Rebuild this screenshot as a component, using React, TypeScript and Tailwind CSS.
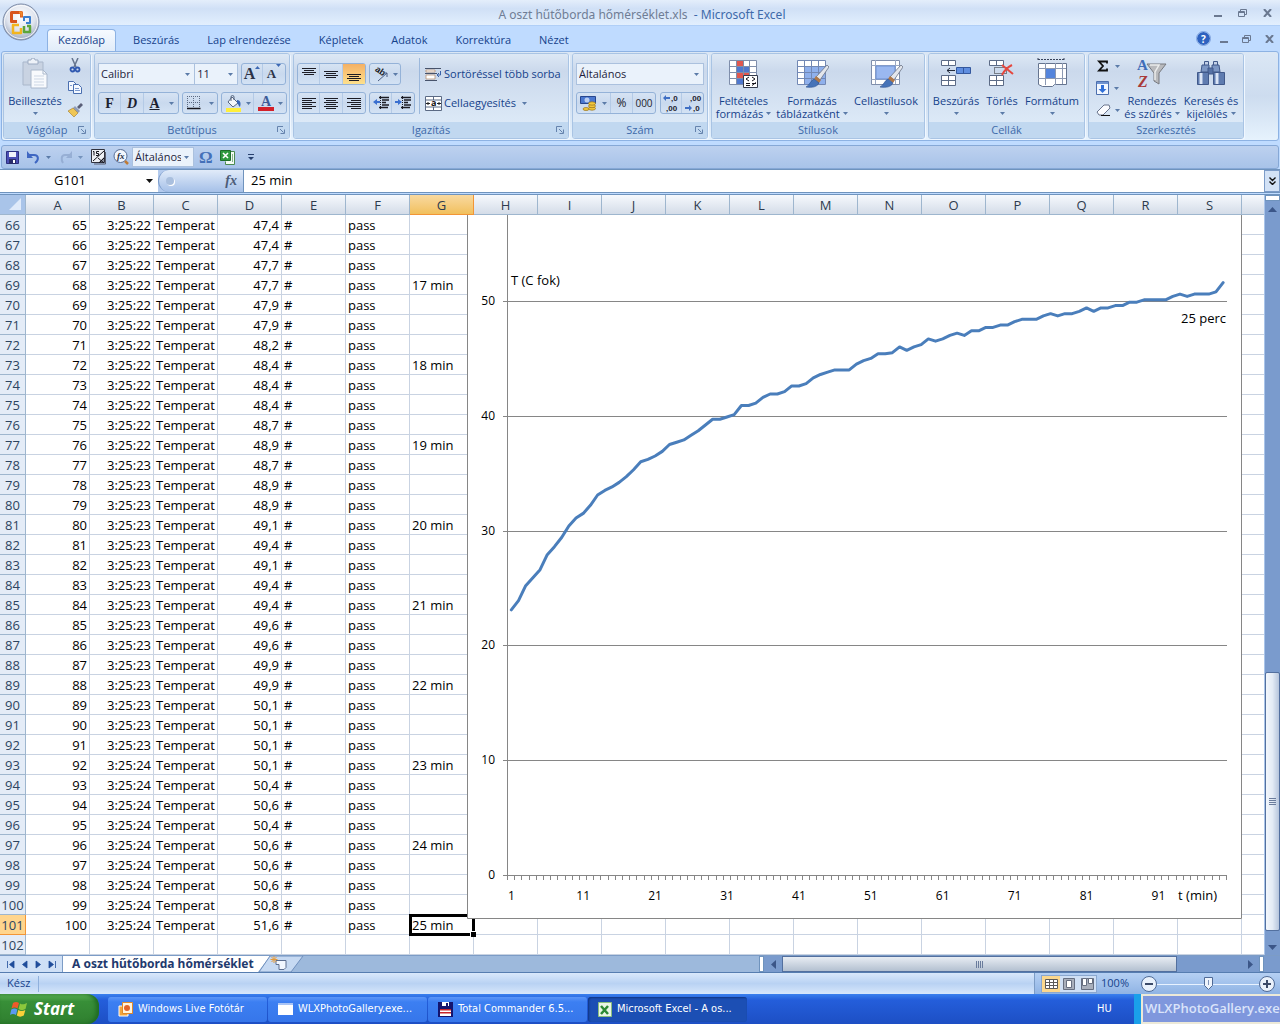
import { useState } from 'react';
import type { ReactNode } from 'react';
import clsx from 'clsx';

const COLUMNS = ['A', 'B', 'C', 'D', 'E', 'F', 'G', 'H', 'I', 'J', 'K', 'L', 'M', 'N', 'O', 'P', 'Q', 'R', 'S', ''];
const TABS = ['Kezdőlap', 'Beszúrás', 'Lap elrendezése', 'Képletek', 'Adatok', 'Korrektúra', 'Nézet'];

const FIRST_ROW = 66;
const LAST_ROW = 102;

// all measurements, one per 15 s
const TEMPS = [
  23.1, 23.9, 25.2, 25.9, 26.6, 27.9, 28.6, 29.4, 30.4, 31.1,
  31.5, 32.2, 33.1, 33.5, 33.8, 34.2, 34.7, 35.3, 36.0, 36.2,
  36.5, 36.9, 37.5, 37.7, 37.9, 38.3, 38.7, 39.2, 39.7, 39.7,
  39.9, 40.1, 40.9, 40.9, 41.1, 41.6, 41.9, 41.9, 42.1, 42.6,
  42.6, 42.8, 43.3, 43.6, 43.8, 44.0, 44.0, 44.0, 44.5, 44.8,
  45.0, 45.4, 45.4, 45.5, 46.0, 45.7, 46.0, 46.2, 46.7, 46.5,
  46.7, 47.0, 47.2, 47.0, 47.4, 47.4, 47.7, 47.7, 47.9, 47.9,
  48.2, 48.4, 48.4, 48.4, 48.7, 48.9, 48.7, 48.9, 48.9, 49.1,
  49.4, 49.1, 49.4, 49.4, 49.6, 49.6, 49.9, 49.9, 50.1, 50.1,
  50.1, 50.1, 50.4, 50.6, 50.4, 50.6, 50.6, 50.6, 50.8, 51.6,
];

function rowCells(row: number): string[] {
  const n = row - 1;
  if (n > TEMPS.length) return [];
  const time = n <= 76 ? '3:25:22' : n <= 91 ? '3:25:23' : '3:25:24';
  const minute = n % 4 === 0 ? `${n / 4} min` : '';
  return [String(n), time, 'Temperat', TEMPS[n - 1].toFixed(1).replace('.', ','), '#', 'pass', minute];
}

/* ---------- small shared pieces ---------- */

function Arrow({ className }: { className?: string }) {
  return (
    <svg width="5" height="3" viewBox="0 0 5 3" className={clsx('shrink-0', className)}>
      <path d="M0 0h5L2.5 3z" fill="#5b7ba8" />
    </svg>
  );
}

function Combo({ label, value, className }: { label: string; value: string; className?: string }) {
  return (
    <div className={clsx('relative flex items-center border border-[#abc1de] bg-[#eaf2fb]', className)}>
      <select aria-label={label} className="w-full h-full appearance-none bg-transparent pl-[2px] pr-3 text-[11px] text-[#1e1e3c] outline-none">
        <option>{value}</option>
      </select>
      <Arrow className="absolute right-1 pointer-events-none" />
    </div>
  );
}

function ButtonGroup({ children }: { children: ReactNode }) {
  return (
    <div className="flex h-[22px] rounded-[3px] border border-[#94b2d8] bg-linear-to-b from-[#d6e3f3] via-[#c9d9ee] to-[#d3e2f4] divide-x divide-[#b4cae6]">
      {children}
    </div>
  );
}

function IconButton({ label, children, className }: { label: string; children: ReactNode; className?: string }) {
  return (
    <button aria-label={label} className={clsx('flex items-center justify-center gap-1 shrink-0', className)}>
      {children}
    </button>
  );
}

function Group({ title, launcher, className, children }: { title: string; launcher?: boolean; className?: string; children: ReactNode }) {
  return (
    <section className={clsx('flex flex-col shrink-0 rounded-[3px] border border-[#a9c4e4] shadow-[1px_1px_0_#f0f7ff] overflow-hidden', className)}>
      <div className="flex-1 bg-linear-to-b from-[#dde8f5] via-[#cbd9ec] via-25% to-[#dce9f7]">{children}</div>
      <div className="relative h-4 bg-[#c1d8f0] text-center text-[11px] leading-4 text-[#3e6aaa]">
        {title}
        {launcher && (
          <button aria-label={`${title} beállításai`} className="absolute right-1 top-1">
            <svg width="8" height="8" viewBox="0 0 8 8" fill="none" stroke="#6583ad">
              <path d="M.5 6V.5H6M3 3l3.500 3.500M7.500 3.500v4h-4" />
            </svg>
          </button>
        )}
      </div>
    </section>
  );
}

function BigButton({ icon, lines, className }: { icon: ReactNode; lines: string[]; className?: string }) {
  return (
    <button className={clsx('flex flex-col items-center shrink-0 pt-1 text-[11px] leading-[13px] text-[#15428b] whitespace-nowrap', className)}>
      <span className="flex h-9 items-start justify-center">{icon}</span>
      <span>{lines[0]}</span>
      <span className="flex h-[13px] items-center gap-[3px]">
        {lines[1]}
        <Arrow />
      </span>
    </button>
  );
}

/* ---------- icons ---------- */

function OfficeLogo() {
  return (
    <svg width="38" height="38" viewBox="0 0 38 38">
      <defs>
        <radialGradient id="orb" cx="50%" cy="35%" r="65%">
          <stop offset="0" stopColor="#ffffff" />
          <stop offset=".6" stopColor="#dfe4ee" />
          <stop offset="1" stopColor="#9aa6bd" />
        </radialGradient>
      </defs>
      <circle cx="19" cy="19" r="18" fill="url(#orb)" stroke="#7b8aa6" />
      <circle cx="19" cy="19" r="16.500" fill="none" stroke="#fff" strokeOpacity=".8" />
      <g fill="none" strokeLinejoin="round">
        <path d="M15 18.500H9.500V9.500h10v5" stroke="#d8541c" strokeWidth="3" />
        <path d="M17 9.500h2.500v4" stroke="#f08a2c" strokeWidth="2" />
        <path d="M22 18v-4h6v6h-4" stroke="#3a7fd0" strokeWidth="2" />
        <path d="M17 22h-6v8h8v-5" stroke="#f3b51e" strokeWidth="2.500" />
        <path d="M22 23v6h6v-6h-3" stroke="#5da63a" strokeWidth="2.500" />
      </g>
    </svg>
  );
}

function PasteIcon() {
  return (
    <svg width="28" height="32" viewBox="0 0 28 32">
      <path d="M2 4h20v23H2z" fill="#c9d3e2" stroke="#a9b7cb" />
      <path d="M7 2h3a2 2 0 0 1 4 0h3v4H7z" fill="#eef2f8" stroke="#9cabc2" />
      <path d="M10 12h12l4 4v14H10z" fill="#f8fafd" stroke="#aab8cc" />
      <path d="M22 12v4h4" fill="none" stroke="#aab8cc" />
      <path d="M13 18h10M13 21h10M13 24h10M13 27h10" stroke="#cdd7e5" />
    </svg>
  );
}

function CutIcon() {
  return (
    <svg width="12" height="15" viewBox="0 0 12 15" fill="none">
      <path d="M3 0l4 9M9 0L5 9" stroke="#66758f" strokeWidth="1.500" />
      <circle cx="3.500" cy="11.500" r="2" stroke="#2f58b0" strokeWidth="1.800" />
      <circle cx="8.500" cy="11.500" r="2" stroke="#2f58b0" strokeWidth="1.800" />
    </svg>
  );
}

function CopyIcon() {
  return (
    <svg width="16" height="14" viewBox="0 0 16 14" fill="#f4f8ff" stroke="#4a6fb0">
      <path d="M1.500.5h5l3 3v6h-8z" />
      <path d="M6.500 3.500h5l3 3v6h-8z" />
      <path d="M8 7.500h4M8 9.500h5M3 4.500h2" stroke="#7d9bd0" />
    </svg>
  );
}

function PainterIcon() {
  return (
    <svg width="15" height="14" viewBox="0 0 15 14">
      <path d="M9 4l4-4 2 2-4 4z" fill="#5a5f78" />
      <path d="M7 3l5 5-2 2-5-5z" fill="#8f9cb8" />
      <path d="M5 5l5 5-4 4-6-6z" fill="#efc655" stroke="#a07a28" strokeWidth=".6" />
    </svg>
  );
}

// rows of text; each number is a line's [inset, width]
function LinesIcon({ rows, top = 0 }: { rows: [number, number][]; top?: number }) {
  return (
    <svg width="14" height="13" viewBox="0 0 14 13" fill="#1c1c24">
      {rows.map(([x, w], i) => (
        <rect key={i} x={x} y={top + i * 2} width={w} height="1" />
      ))}
    </svg>
  );
}

function IndentIcon({ out }: { out?: boolean }) {
  return (
    <svg width="16" height="14" viewBox="0 0 16 14">
      <path d="M6 1.500h10M9 4h7M9 6.500h4M9 9h7M6 11.500h9" stroke="#1c1c24" strokeWidth="1.400" />
      <path d={out ? 'M0 6l4-3v2h3v2H4v2z' : 'M7 6L3 3v2H0v2h3v2z'} fill="#3a6fd0" />
      <path d="M7.500 0v14" stroke="#1c1c24" strokeDasharray="1 1" />
    </svg>
  );
}

function WrapIcon() {
  return (
    <svg width="17" height="15" viewBox="0 0 17 15">
      <path d="M0 1.500h16M0 6.500h12M0 13.500h12" stroke="#47536b" />
      <path d="M1 3h9v2H1zM1 8h9v4H1z" fill="#fff" stroke="#b99273" strokeWidth=".8" />
      <path d="M15.500 4v4h-3m1.500-2l-2 2 2 2" stroke="#3a62a8" fill="none" />
    </svg>
  );
}

function MergeIcon() {
  return (
    <svg width="17" height="15" viewBox="0 0 17 15">
      <path d="M.5.5h16v14H.5z" fill="#fff" stroke="#5b6a84" />
      <path d="M.5 4h16M.5 11h16M8.500 0v4M8.500 11v4" stroke="#5b6a84" />
      <path d="M1 7.500h4M12 7.500h4M3 6v3M14 6v3" stroke="#222" />
      <text x="6" y="10" fontSize="9" fontWeight="700" fill="#111">a</text>
    </svg>
  );
}

function BordersIcon() {
  return (
    <svg width="14" height="14" viewBox="0 0 14 14" fill="none" stroke="#5c6b84">
      <path d="M.5 0v12M6.500 0v12M12.500 0v12M0 .5h13M0 6.500h13" strokeDasharray="1 1" />
      <path d="M0 12.500h13.500" stroke="#16161e" strokeWidth="1.500" />
    </svg>
  );
}

function FillIcon() {
  return (
    <svg width="17" height="17" viewBox="0 0 17 17">
      <path d="M7 2l6 6-5 4-5-5z" fill="#f4f7fc" stroke="#56657f" />
      <path d="M6 6V2a1.500 1.500 0 0 1 3 0v3" fill="none" stroke="#56657f" />
      <path d="M12 5c4 0 4 4 3 7-2-1-1-3-3-4z" fill="#3765b5" />
      <path d="M1 13h15v4H1z" fill="#ffef3a" />
    </svg>
  );
}

function FontColorIcon() {
  return (
    <svg width="16" height="16" viewBox="0 0 16 16">
      <text x="3" y="11" fontSize="14" fontWeight="700" fill="#3d5b98" className="font-['Liberation_Serif',serif]">A</text>
      <path d="M0 12h16v4H0z" fill="#d3202a" />
    </svg>
  );
}

function MoneyIcon() {
  return (
    <svg width="17" height="16" viewBox="0 0 17 16">
      <path d="M.5 1.500h15v7H.5z" fill="#4b78cf" stroke="#27468e" />
      <circle cx="7" cy="5" r="2.500" fill="#b9cdf2" />
      <g fill="#f2c83c" stroke="#98711a" strokeWidth=".7">
        <ellipse cx="12" cy="13.500" rx="3.500" ry="1.700" />
        <ellipse cx="12" cy="11" rx="3.500" ry="1.700" />
        <ellipse cx="12" cy="8.500" rx="3.500" ry="1.700" />
        <ellipse cx="6" cy="14" rx="3" ry="1.500" />
      </g>
    </svg>
  );
}

function DecimalIcon({ more }: { more?: boolean }) {
  return (
    <svg width="18" height="20" viewBox="0 0 18 20" fontSize="8" fontWeight="700" fill="#23232f" className="font-['Liberation_Sans',sans-serif]">
      <path d={more ? 'M1 5l3-3v2h4v2H4v2z' : 'M8 15l-3-3v2H1v2h4v2z'} fill="#3f6fc4" />
      <text x={more ? 9 : 6} y="8">{more ? ',0' : ',00'}</text>
      <text x={more ? 4 : 9} y="18">{more ? ',00' : ',0'}</text>
    </svg>
  );
}

function Brush() {
  return (
    <g>
      <path d="M31 7l2 2-9 13-4-3z" fill="#e3e6ec" stroke="#6b7485" strokeWidth=".8" />
      <path d="M20 18l5 4-2 3-5-4z" fill="#b07848" />
      <path d="M18 21l5 4c-2 4-7 5-13 4 4-2 4-6 8-8z" fill="#4673b8" stroke="#2c5090" strokeWidth=".6" />
    </g>
  );
}

function CondFormatIcon() {
  return (
    <svg width="32" height="30" viewBox="0 0 32 30">
      <path d="M1.500 2.500h27v24h-27z" fill="#fff" />
      <path d="M8 2h7v6H8zM8 14h13v6H8z" fill="#e0574f" />
      <path d="M8 8h13v6H8zM8 20h7v6H8z" fill="#4f78cf" />
      <path d="M1.500 2.500h27v24h-27zM1.500 8.500h27M1.500 14.500h27M1.500 20.500h27M8.500 2v24M15.500 2v24M21.500 2v24" fill="none" stroke="#7f8eab" />
      <path d="M15.500 17.500h14v12h-14z" fill="#fff" stroke="#333b4c" />
      <path d="M21 19l-3 2 3 2M24 19l3 2-3 2M18 25.500h4M18 27.500h4M24 25.500h4M24 27.500l4-3" fill="none" stroke="#14141c" />
    </svg>
  );
}

function TableFormatIcon() {
  return (
    <svg width="33" height="30" viewBox="0 0 33 30">
      <path d="M1.500 2.500h28v24h-28z" fill="#fff" />
      <path d="M8 8h21v18H8z" fill="#8fb0ec" />
      <path d="M1.500 2.500h28v24h-28zM1.500 8.500h28M1.500 14.500h28M1.500 20.500h28M8.500 2v24M15.500 2v24M22.500 2v24" fill="none" stroke="#7288b4" />
      <Brush />
    </svg>
  );
}

function CellStyleIcon() {
  return (
    <svg width="33" height="30" viewBox="0 0 33 30">
      <path d="M1.500 2.500h28v24h-28z" fill="#fff" stroke="#7f8eab" />
      <path d="M1.500 7.500h28M1.500 21.500h28M5.500 2v24M25.500 2v24" stroke="#9aa8c2" />
      <path d="M6 8h19v13H6z" fill="#9ab8f0" stroke="#6c8fd0" />
      <Brush />
    </svg>
  );
}

function InsertCellsIcon() {
  return (
    <svg width="32" height="30" viewBox="0 0 32 30" stroke="#5c6b86">
      <path d="M1.500 2.500h14v5h-14zM8.500 2.500v5M1.500 17.500h14v10h-14zM8.500 17.500v10M1.500 22.500h14" fill="#fff" />
      <path d="M16.500 9.500h14v6h-14zM23.500 9.500v6" fill="#5f8ee0" stroke="#34589e" />
      <path d="M7 12.500h8M10 10l-3 2.500 3 2.500" fill="none" stroke="#222a3a" />
    </svg>
  );
}

function DeleteCellsIcon() {
  return (
    <svg width="28" height="30" viewBox="0 0 28 30" stroke="#5c6b86">
      <path d="M1.500 2.500h14v5h-14zM8.500 2.500v5M1.500 17.500h14v10h-14zM8.500 17.500v10M1.500 22.500h14" fill="#fff" />
      <path d="M6.500 9.500h12v6h-12z" fill="none" strokeDasharray="1 1" stroke="#222" />
      <path d="M14 7l11 9M24 7c-4 2-8 6-10 10" fill="none" stroke="#e5483f" strokeWidth="2" />
    </svg>
  );
}

function FormatCellsIcon() {
  return (
    <svg width="32" height="30" viewBox="0 0 32 30">
      <path d="M2 1.500h26M2 0v3M28 0v3" stroke="#38435a" strokeDasharray="2 1" />
      <path d="M2.500 5.500h28v21h-12l-2 2h-10l-4-2z" fill="#fff" stroke="#65748f" />
      <path d="M2 10.500h28M2 20.500h28M9.500 5v22M19.500 5v22M26.500 5v21" stroke="#8c99b2" />
      <path d="M10 11h9v9h-9z" fill="#5585dc" />
    </svg>
  );
}

function SortFilterIcon() {
  return (
    <svg width="32" height="32" viewBox="0 0 32 32">
      <text x="1" y="12" fontSize="15" fontWeight="700" fill="#3f6db8" className="font-['Liberation_Serif',serif]">A</text>
      <text x="2" y="29" fontSize="16" fontWeight="700" fontStyle="italic" fill="#a83a3a" className="font-['Liberation_Serif',serif]">Z</text>
      <path d="M11 6h19l-7 9v11l-5-3v-8z" fill="#b9babd" stroke="#77797f" />
      <path d="M14 7h9l-4 7v8" fill="none" stroke="#eceded" strokeWidth="1.500" />
    </svg>
  );
}

function BinocularsIcon() {
  return (
    <svg width="30" height="30" viewBox="0 0 30 30" stroke="#41598a">
      <path d="M8.500 3.500h4v4h-4zM17.500 3.500h4v4h-4z" fill="#c4d1e8" />
      <path d="M6 7h7v7H5zM16 7h7l1 7h-8z" fill="#7d97c4" />
      <path d="M12 10h5v6h-5z" fill="#5672a6" />
      <path d="M1.500 14.500h11v12h-11zM17.500 14.500h11v12h-11z" fill="#5f7cb0" />
      <path d="M5 15v11M21 15v11" stroke="#dbe5f6" strokeWidth="3" />
    </svg>
  );
}

function SaveIcon() {
  return (
    <svg width="13" height="13" viewBox="0 0 13 13">
      <path d="M.5.5h12v12H.5z" fill="#4b4fb4" stroke="#2c2f80" />
      <path d="M3 1h7v5H3z" fill="#f1f3fb" />
      <path d="M3 8h7v5H3z" fill="#2a2c6a" />
      <path d="M7 9h2v3H7z" fill="#fff" />
    </svg>
  );
}

function UndoIcon({ redo }: { redo?: boolean }) {
  return (
    <svg width="13" height="13" viewBox="0 0 13 13">
      <path
        d={redo ? 'M11 4H6C2 4 2 9 4 12' : 'M2 4h5c5 0 5 5 1 8'}
        fill="none" stroke={redo ? '#8ba3ca' : '#3f67c2'} strokeWidth="2"
      />
      <path d={redo ? 'M13 0v7H7z' : 'M0 0v7h6z'} fill={redo ? '#8ba3ca' : '#3f67c2'} />
    </svg>
  );
}

function PercentPageIcon() {
  return (
    <svg width="16" height="16" viewBox="0 0 16 16">
      <path d="M.5.5h13v13H.5z" fill="#eef0f5" stroke="#30323e" />
      <path d="M8 13l5-5v5z" fill="#8a8e9c" />
      <path d="M2 2.500h1v4M8 2.500H5.500v2h2v2H5M2 12L13 2M7 9l6 5M13 9l-5 5" fill="none" stroke="#15151d" />
      <path d="M14.500 3v12H3" fill="none" stroke="#5b5f70" />
    </svg>
  );
}

function FxSearchIcon() {
  return (
    <svg width="16" height="16" viewBox="0 0 16 16">
      <circle cx="7.500" cy="7" r="6.500" fill="#f2f6fd" stroke="#5a6f96" />
      <path d="M12 12l3 3" stroke="#c07b36" strokeWidth="2.500" />
      <text x="4" y="10" fontSize="9" fontStyle="italic" fontWeight="700" fill="#222b44" className="font-['Liberation_Serif',serif]">fx</text>
    </svg>
  );
}

function ExcelSheetIcon() {
  return (
    <svg width="16" height="15" viewBox="0 0 16 15">
      <path d="M6.500 1.500h8v13h-9v-3" fill="#f4fbf4" stroke="#4b8a4f" />
      <path d="M.5.5h10v10H.5z" fill="#2f9a3e" stroke="#1d6e2a" />
      <path d="M3 3l5 5M8 3L3 8" stroke="#fff" strokeWidth="1.600" />
      <path d="M12.500 4v8" stroke="#88b48b" />
    </svg>
  );
}

function WindowsFlag() {
  return (
    <svg width="18" height="18" viewBox="0 0 18 18">
      <path d="M3 3c2-1.500 4-1.500 6 0L7.500 8.500c-2-1.500-4-1.500-6 0z" fill="#ee5a2a" />
      <path d="M10 3.500c2 1.200 4 1.200 7-.5L15.500 9c-2.500 1.500-5 1.500-7 0z" fill="#8cc83c" />
      <path d="M1.300 9.500c2-1.500 4-1.500 6 0L6 15c-2-1.500-4-1.500-6 0z" fill="#5a9af0" />
      <path d="M8.300 10c2 1.300 4.500 1.300 7 0l-1.500 5.500c-2.500 1.500-5 1.500-7 0z" fill="#fad03a" />
    </svg>
  );
}

function WindowButtons({ small }: { small?: boolean }) {
  return (
    <div className={clsx('flex items-center text-[#6a7890]', small ? 'gap-[14px]' : 'gap-4')}>
      <button aria-label="Kis méret">
        <svg width="8" height="10" viewBox="0 0 8 10"><path d="M0 7h8v2H0z" fill="currentColor" /></svg>
      </button>
      <button aria-label="Előző méret">
        <svg width="9" height="8" viewBox="0 0 9 8" fill="none" stroke="currentColor">
          <path d="M2.500 2V.500h6v5H7M.5 2.500h6v5h-6zM.5 3.500h6" />
        </svg>
      </button>
      <button aria-label={small ? 'Munkafüzet bezárása' : 'Bezárás'}>
        <svg width="9" height="8" viewBox="0 0 9 8" stroke="currentColor" strokeWidth="2"><path d="M1 0l7 8M8 0L1 8" /></svg>
      </button>
    </div>
  );
}

/* ---------- ribbon ---------- */

const FULL: [number, number] = [0, 14];
const SIX = [0, 1, 2, 3, 4, 5];

function Ribbon() {
  return (
    <div className="flex gap-[3px] h-[90px] mx-px px-px py-px rounded-[3px] border border-[#8db2e3] bg-linear-to-b from-[#dbe7f5] via-[#cddcef] to-[#e6f2fd] overflow-hidden">
      <Group title="Vágólap" launcher className="w-[88px]">
        <div className="flex">
          <BigButton icon={<PasteIcon />} lines={['Beillesztés', '']} className="w-[62px]" />
          <div className="flex flex-col items-center gap-2 pt-1 pl-px">
            <IconButton label="Kivágás"><CutIcon /></IconButton>
            <IconButton label="Másolás"><CopyIcon /></IconButton>
            <IconButton label="Formátummásoló"><PainterIcon /></IconButton>
          </div>
        </div>
      </Group>

      <Group title="Betűtípus" launcher className="w-[196px]">
        <div className="flex flex-col gap-[7px] pt-[9px] px-[3px]">
          <div className="flex">
            <Combo label="Betűtípus" value="Calibri" className="w-[98px] h-[22px]" />
            <Combo label="Betűméret" value="11" className="w-[43px] h-[22px] mr-[3px] border-l-0" />
            <ButtonGroup>
              <IconButton label="Betűméret növelése" className="w-[21px] text-[16px] font-bold text-[#2b3348] font-['Liberation_Serif',serif]">
                <span className="flex items-start">A<svg width="5" height="3" viewBox="0 0 5 3" className="mt-1"><path d="M0 3h5L2.500 0z" fill="#3d68b4" /></svg></span>
              </IconButton>
              <IconButton label="Betűméret csökkentése" className="w-[22px] text-[13px] font-bold text-[#2b3348] font-['Liberation_Serif',serif]">
                <span className="flex items-start">A<svg width="5" height="3" viewBox="0 0 5 3"><path d="M0 0h5L2.500 3z" fill="#3d68b4" /></svg></span>
              </IconButton>
            </ButtonGroup>
          </div>
          <div className="flex gap-[3px] text-[14px] font-bold text-[#1c2030] font-['Liberation_Serif',serif]">
            <ButtonGroup>
              <IconButton label="Félkövér" className="w-[22px]">F</IconButton>
              <IconButton label="Dőlt" className="w-[23px] italic">D</IconButton>
              <IconButton label="Aláhúzott" className="w-[34px]"><span className="flex-1 underline">A</span><Arrow className="mr-1" /></IconButton>
            </ButtonGroup>
            <ButtonGroup>
              <IconButton label="Szegélyek" className="w-[34px]"><BordersIcon /><Arrow className="ml-1" /></IconButton>
            </ButtonGroup>
            <ButtonGroup>
              <IconButton label="Kitöltőszín" className="w-[32px]"><FillIcon /><Arrow /></IconButton>
              <IconButton label="Betűszín" className="w-[32px]"><FontColorIcon /><Arrow /></IconButton>
            </ButtonGroup>
          </div>
        </div>
      </Group>

      <Group title="Igazítás" launcher className="w-[276px]">
        <div className="flex">
          <div className="flex flex-col gap-[7px] pt-[9px] pl-[3px]">
            <div className="flex gap-[3px]">
              <ButtonGroup>
                <IconButton label="Felülre igazítás" className="w-[22px]"><LinesIcon rows={[FULL, [2, 10], FULL, [2, 10]]} top={0} /></IconButton>
                <IconButton label="Középre igazítás" className="w-[23px]"><LinesIcon rows={[FULL, [2, 10], FULL, [2, 10]]} top={3} /></IconButton>
                <IconButton label="Alulra igazítás" className="w-[22px] bg-linear-to-b from-[#f4b064] to-[#fde08c]"><LinesIcon rows={[FULL, [2, 10], FULL, [2, 10]]} top={6} /></IconButton>
              </ButtonGroup>
              <ButtonGroup>
                <IconButton label="Tájolás" className="w-[30px]">
                  <svg width="17" height="18" viewBox="0 0 17 18">
                    <text x="2" y="9" fontSize="9" fontWeight="700" fill="#1c1c24" transform="rotate(35 8 8)" className="font-['Liberation_Sans',sans-serif]">ab</text>
                    <path d="M6 16l9-8M11 8h4v4" fill="none" stroke="#4c5f84" />
                  </svg>
                  <Arrow />
                </IconButton>
              </ButtonGroup>
            </div>
            <div className="flex gap-[3px]">
              <ButtonGroup>
                <IconButton label="Balra zárt" className="w-[22px]"><LinesIcon rows={SIX.map((i) => [0, i % 2 ? 10 : 14])} top={1} /></IconButton>
                <IconButton label="Középre zárt" className="w-[23px]"><LinesIcon rows={SIX.map((i) => (i % 2 ? [2, 10] : FULL))} top={1} /></IconButton>
                <IconButton label="Jobbra zárt" className="w-[22px]"><LinesIcon rows={SIX.map((i) => (i % 2 ? [4, 10] : FULL))} top={1} /></IconButton>
              </ButtonGroup>
              <ButtonGroup>
                <IconButton label="Behúzás csökkentése" className="w-[22px]"><IndentIcon out /></IconButton>
                <IconButton label="Behúzás növelése" className="w-[22px]"><IndentIcon /></IconButton>
              </ButtonGroup>
            </div>
          </div>
          <div className="w-px h-14 mt-1 ml-1 mr-[5px] bg-[#9cb8dc]" />
          <div className="flex flex-col gap-[7px] pt-[9px] text-[11px] text-[#15428b] whitespace-nowrap">
            <button className="flex h-[22px] items-center gap-[2px]"><WrapIcon />Sortöréssel több sorba</button>
            <button className="flex h-[22px] items-center gap-[2px]"><MergeIcon />Cellaegyesítés<Arrow className="ml-1" /></button>
          </div>
        </div>
      </Group>

      <Group title="Szám" launcher className="w-[136px]">
        <div className="flex flex-col gap-[7px] pt-[9px] px-[3px]">
          <Combo label="Számformátum" value="Általános" className="w-full h-[22px]" />
          <div className="flex justify-between text-[12px] text-[#22222c]">
            <ButtonGroup>
              <IconButton label="Könyvelési számformátum" className="w-[34px]"><MoneyIcon /><Arrow className="ml-px" /></IconButton>
              <IconButton label="Százalék" className="w-[22px]">%</IconButton>
              <IconButton label="Ezres csoport" className="w-[22px] text-[10px]">000</IconButton>
            </ButtonGroup>
            <ButtonGroup>
              <IconButton label="Tizedesjegyek növelése" className="w-[21px]"><DecimalIcon more /></IconButton>
              <IconButton label="Tizedesjegyek csökkentése" className="w-[21px]"><DecimalIcon /></IconButton>
            </ButtonGroup>
          </div>
        </div>
      </Group>

      <Group title="Stílusok" className="w-[214px]">
        <div className="flex">
          <BigButton icon={<CondFormatIcon />} lines={['Feltételes', 'formázás']} className="w-[63px]" />
          <BigButton icon={<TableFormatIcon />} lines={['Formázás', 'táblázatként']} className="w-[74px]" />
          <BigButton icon={<CellStyleIcon />} lines={['Cellastílusok', '']} className="w-[74px]" />
        </div>
      </Group>

      <Group title="Cellák" className="w-[157px]">
        <div className="flex">
          <BigButton icon={<InsertCellsIcon />} lines={['Beszúrás', '']} className="w-[54px]" />
          <BigButton icon={<DeleteCellsIcon />} lines={['Törlés', '']} className="w-[38px]" />
          <BigButton icon={<FormatCellsIcon />} lines={['Formátum', '']} className="w-[62px]" />
        </div>
      </Group>

      <Group title="Szerkesztés" className="w-[156px]">
        <div className="flex">
          <div className="flex flex-col gap-[6px] w-[34px] pt-1 pl-[3px]">
            <IconButton label="AutoSzum" className="h-4">
              <svg width="16" height="12" viewBox="0 0 16 12"><path d="M12 3.500V1.500H4L8 6l-4 4.500h8v-2" fill="none" stroke="#111" strokeWidth="1.800" /></svg>
              <Arrow />
            </IconButton>
            <IconButton label="Kitöltés" className="h-4">
              <svg width="14" height="15" viewBox="0 0 14 15">
                <path d="M.5.5h12v13H.5z" fill="#f2f7ff" stroke="#4c6fae" />
                <path d="M5 4h3v4h2.500l-4 4-4-4H5z" fill="#2f6fd8" />
                <path d="M1 1h11v2H1z" fill="#6f93d0" />
              </svg>
              <Arrow />
            </IconButton>
            <IconButton label="Törlés a cellákból" className="h-4">
              <svg width="15" height="13" viewBox="0 0 15 13">
                <path d="M8 1h5l1 3-7 7H3L1 8z" fill="#fbfcff" stroke="#6a758c" />
                <path d="M5 11.500h9" stroke="#111" />
              </svg>
              <Arrow />
            </IconButton>
          </div>
          <BigButton icon={<SortFilterIcon />} lines={['Rendezés', 'és szűrés']} className="w-[58px]" />
          <BigButton icon={<BinocularsIcon />} lines={['Keresés és', 'kijelölés']} className="w-[60px]" />
        </div>
      </Group>
    </div>
  );
}

function QuickAccess() {
  return (
    <div className="flex h-6 mx-px mt-1 items-center rounded-[3px] border border-[#86a8d6] bg-linear-to-b from-[#bdd1ef] to-[#a8c3e9] pl-1 overflow-hidden">
      <IconButton label="Mentés" className="mr-2"><SaveIcon /></IconButton>
      <IconButton label="Visszavonás" className="mr-2 gap-[6px]"><UndoIcon /><Arrow /></IconButton>
      <IconButton label="Ismét" className="mr-2 gap-[6px] opacity-70"><UndoIcon redo /><Arrow /></IconButton>
      <IconButton label="Százalék formátum" className="mr-[6px]"><PercentPageIcon /></IconButton>
      <IconButton label="Képletkiértékelés" className="mr-[3px]"><FxSearchIcon /></IconButton>
      <Combo label="Stílus" value="Általános" className="w-[62px] h-5" />
      <IconButton label="Szimbólum" className="mx-[5px] text-[17px] font-bold leading-none text-[#4470b8] font-['Liberation_Serif',serif]">Ω</IconButton>
      <IconButton label="Excel" className="mx-[2px] mr-3"><ExcelSheetIcon /></IconButton>
      <IconButton label="Gyorselérési eszköztár testreszabása">
        <svg width="6" height="6" viewBox="0 0 6 6" fill="#27406e"><path d="M0 0h6v1H0zM0 3h6L3 6z" /></svg>
      </IconButton>
    </div>
  );
}

function FormulaBar({ value, onChange }: { value: string; onChange: (v: string) => void }) {
  return (
    <div className="flex h-6 border-y border-[#6f93bd] bg-white text-[13px]">
      <div className="flex w-[158px] items-center">
        <input aria-label="Név mező" defaultValue="G101" className="w-[140px] text-center outline-none" />
        <svg width="7" height="4" viewBox="0 0 7 4" className="ml-[6px]"><path d="M0 0h7L3.500 4z" fill="#111" /></svg>
      </div>
      <div className="flex flex-1 bg-[#b4cbee]">
        <div className="flex w-[85px] shrink-0 items-center justify-between rounded-l-full border-l border-[#7c9ccb] bg-linear-to-b from-[#e1ebf9] to-[#a5c0e8] pr-[6px] pl-[7px]">
          <span className="size-2 rounded-full bg-[#a9bfde] shadow-[1px_1px_0_#fff]" />
          <button aria-label="Függvény beszúrása" className="text-[14px] italic font-bold leading-none text-[#4c5c78] font-['Liberation_Serif',serif]">fx</button>
        </div>
        <input
          aria-label="Szerkesztőléc"
          value={value}
          onChange={(e) => onChange(e.target.value)}
          className="flex-1 min-w-0 border-l border-[#6f93bd] bg-white pl-[7px] outline-none"
        />
      </div>
      <button aria-label="Szerkesztőléc kibontása" className="flex w-4 items-center justify-center border border-[#7d9cc8] bg-[#d3e2f6]">
        <svg width="7" height="8" viewBox="0 0 7 8" fill="none" stroke="#111" strokeWidth="1.400"><path d="M.5.5l3 3 3-3M.5 4.500l3 3 3-3" /></svg>
      </button>
    </div>
  );
}

/* ---------- sheet ---------- */

// plot area inside the chart frame
const PLOT = { left: 40, right: 759, zero: 660, unit: 11.48 };
const STEP = (PLOT.right - PLOT.left) / TEMPS.length;

function Chart() {
  const y = (v: number) => PLOT.zero - v * PLOT.unit;
  const points = TEMPS.map((t, i) => `${PLOT.left + (i + 0.6) * STEP},${y(t)}`).join(' ');
  return (
    <svg
      width="775" height="704" viewBox="0 0 775 704"
      role="img" aria-label="Hőmérséklet az idő függvényében"
      className="absolute left-[467px] top-5 bg-white text-[12px]"
    >
      <path d="M.5 0v703.500h774V0" fill="none" stroke="#868686" />
      {[0, 10, 20, 30, 40, 50].map((v) => (
        <g key={v}>
          <path d={`M36 ${Math.round(y(v)) + 0.5}H${PLOT.right + 1}`} stroke="#868686" />
          <text x="28" y={Math.round(y(v)) + 4} textAnchor="end">{v}</text>
        </g>
      ))}
      <path d={`M${PLOT.left + 0.5} 0V${PLOT.zero}`} stroke="#868686" />
      {Array.from({ length: TEMPS.length + 1 }, (_, i) => (
        <path key={i} d={`M${Math.round(PLOT.left + i * STEP) + 0.5} ${PLOT.zero}v5`} stroke="#868686" />
      ))}
      {[1, 11, 21, 31, 41, 51, 61, 71, 81, 91].map((n) => (
        <text key={n} x={PLOT.left + (n - 0.4) * STEP} y="685" textAnchor="middle">{n}</text>
      ))}
      <polyline points={points} fill="none" stroke="#4a7ebb" strokeWidth="3" strokeLinejoin="round" strokeLinecap="round" />
      <g className="text-[13px]">
        <text x="44" y="70">T (C fok)</text>
        <text x="759" y="108" textAnchor="end">25 perc</text>
        <text x="750" y="685" textAnchor="end">t (min)</text>
      </g>
    </svg>
  );
}

function Sheet({ active }: { active: string }) {
  const rows = Array.from({ length: LAST_ROW - FIRST_ROW + 1 }, (_, i) => FIRST_ROW + i);
  return (
    <div className="relative flex-1 overflow-hidden bg-white">
      <table className="w-full min-w-[1264px] table-fixed border-separate border-spacing-0 text-[13px] leading-[17px]">
        <colgroup>
          <col className="w-[26px]" />
          {COLUMNS.map((c, i) => <col key={i} className={c ? 'w-16' : ''} />)}
        </colgroup>
        <thead>
          <tr className="h-5">
            <th aria-label="Összes kijelölése" className="border-b border-r border-[#9eb6ce] bg-[#a9c4e9] p-0">
              <svg width="13" height="13" viewBox="0 0 13 13" className="ml-auto mr-[3px]"><path d="M12 0v12H0z" fill="#dfeafa" /></svg>
            </th>
            {COLUMNS.map((c, i) => (
              <th
                key={i}
                className={clsx(
                  'border-b border-r p-0 align-bottom font-normal text-[#2d3b4e] bg-linear-to-b',
                  c === 'G' ? 'border-[#f29536] from-[#f9d99f] to-[#f1c05c]' : 'border-[#9eb6ce] from-[#f6f9fd] to-[#d4dce8]',
                  !c && 'border-r-0',
                )}
              >
                {c}
              </th>
            ))}
          </tr>
        </thead>
        <tbody>
          {rows.map((row) => {
            const cells = rowCells(row);
            return (
              <tr key={row} className="h-5">
                <th
                  className={clsx(
                    'border-b border-r p-0 align-bottom font-normal text-[#2d4560]',
                    row === 101 ? 'border-[#f29536] bg-[#ffd58d]' : 'border-[#9eb6ce] bg-[#e4ecf7]',
                  )}
                >
                  {row}
                </th>
                {COLUMNS.map((c, i) => (
                  <td
                    key={i}
                    className={clsx(
                      'border-b border-r border-[#c9d3e2] px-[2px] py-0 align-bottom whitespace-nowrap',
                      (c === 'A' || c === 'B' || c === 'D') && 'text-right',
                      !c && 'border-r-0',
                      `${c}${row}` === active && 'relative outline-3 outline-black -outline-offset-2',
                    )}
                  >
                    {cells[i]}
                    {`${c}${row}` === active && <span className="absolute -right-[3px] -bottom-[3px] size-[6px] border-l border-t border-white bg-black" />}
                  </td>
                ))}
              </tr>
            );
          })}
        </tbody>
      </table>
      <Chart />
    </div>
  );
}

function VScroll() {
  return (
    <div className="flex w-4 shrink-0 flex-col border-l border-[#a9c4e9] bg-[#7a9bcd]">
      <div className="h-[6px] border border-[#6f93bd] bg-white" />
      <button aria-label="Görgetés fel" className="flex h-4 items-center justify-center">
        <svg width="9" height="5" viewBox="0 0 9 5"><path d="M0 5h9L4.500 0z" fill="#3b5688" /></svg>
      </button>
      <div className="basis-0 grow-[456]" />
      <div className="flex basis-0 grow-[258] items-center justify-center rounded-[2px] border border-[#53709f] bg-linear-to-r from-[#f3f7fc] via-[#e3ebf5] to-[#b6c5dc]">
        <svg width="7" height="7" viewBox="0 0 7 7" stroke="#6a7c9c"><path d="M0 .5h7M0 2.500h7M0 4.500h7M0 6.500h7" /></svg>
      </div>
      <button aria-label="Görgetés le" className="flex h-6 items-center justify-center pt-2">
        <svg width="9" height="5" viewBox="0 0 9 5"><path d="M0 0h9L4.500 5z" fill="#3b5688" /></svg>
      </button>
    </div>
  );
}

const NAV = [
  { label: 'Első lap', d: 'M1.500 1v7M8 1v7L3.500 4.500z' },
  { label: 'Előző lap', d: 'M7 1v7L2.500 4.500z' },
  { label: 'Következő lap', d: 'M3 1v7l4.500-3.500z' },
  { label: 'Utolsó lap', d: 'M8.500 1v7M2 1v7l4.500-3.500z' },
];

function SheetTabs() {
  return (
    <div className="flex h-[17px] border-t border-[#7c9cc6] bg-[#9db9dc]">
      <div className="flex w-[63px] shrink-0 items-center justify-around border-r border-[#7c9cc6] bg-[#cfe0f6] px-1">
        {NAV.map((n) => (
          <button key={n.label} aria-label={n.label}>
            <svg width="9" height="9" viewBox="0 0 9 9" fill="#1f4c9a" stroke="#1f4c9a" strokeWidth=".8"><path d={n.d} /></svg>
          </button>
        ))}
      </div>
      <button className="flex items-center bg-white pl-[9px] pr-1 text-[12px] font-bold leading-4 text-[#1f3a6e] whitespace-nowrap font-['Noto_Sans',sans-serif]">
        A oszt hűtőborda hőmérséklet
      </button>
      <button aria-label="Munkalap beszúrása" className="shrink-0">
        <svg width="46" height="16" viewBox="0 0 46 16">
          <path d="M0 0h12L0 16z" fill="#fff" />
          <path d="M12 0h33L33 16H1z" fill="#c6d9f2" stroke="#6f8fbd" />
          <path d="M18 4.500h10v7l-2 2h-5v-5h-3z" fill="#f2f7ff" stroke="#5d6f90" />
          <path d="M16 0v7M12.500 3.500h7M13.500 1l5 5M18.500 1l-5 5" stroke="#e39a3c" />
        </svg>
      </button>
      <div className="flex-1" />
      <div className="flex w-[521px] bg-[#7a9bcd]">
        <div className="w-[5px] border border-[#6f93bd] bg-white" />
        <button aria-label="Görgetés balra" className="flex w-[18px] items-center justify-center">
          <svg width="5" height="9" viewBox="0 0 5 9"><path d="M5 0v9L0 4.500z" fill="#3b5688" /></svg>
        </button>
        <div className="flex basis-0 grow-[395] items-center justify-center border border-[#53709f] bg-linear-to-b from-[#e8edf3] to-[#b3c0d0]">
          <svg width="7" height="7" viewBox="0 0 7 7" stroke="#6a7c9c"><path d="M.5 0v7M2.500 0v7M4.500 0v7M6.500 0v7" /></svg>
        </div>
        <div className="basis-0 grow-[64]" />
        <button aria-label="Görgetés jobbra" className="flex w-[18px] items-center justify-center">
          <svg width="5" height="9" viewBox="0 0 5 9"><path d="M0 0v9l5-4.500z" fill="#3b5688" /></svg>
        </button>
        <div className="w-[5px] mr-4 border border-[#6f93bd] bg-white" />
      </div>
    </div>
  );
}

function StatusBar() {
  return (
    <div className="flex h-[22px] items-center border-t border-[#567db0] bg-linear-to-b from-[#d9e8fb] via-[#b9d2f3] to-[#d7e7fb] text-[11px] text-[#15428b]">
      <span className="w-[38px] pl-[7px]">Kész</span>
      <div className="w-px h-4 bg-[#8fb0dc]" />
      <div className="flex-1" />
      <div className="flex h-full w-[246px] items-center border-l border-[#7c9cc6] bg-linear-to-b from-[#b5d0f3] to-[#8fb3e4] pl-[6px]">
        <div className="flex h-[18px] border border-[#8aa7cf] bg-[#cfdff4]">
          <button aria-label="Normál" className="flex w-[18px] items-center justify-center bg-[#fbd78c]">
            <svg width="13" height="10" viewBox="0 0 13 10" fill="#fff" stroke="#5c5a58"><path d="M.5.5h12v9H.5zM.5 3.500h12M.5 6.500h12M4.500.5v9M8.500.5v9" /></svg>
          </button>
          <button aria-label="Lapelrendezés" className="flex w-[18px] items-center justify-center">
            <svg width="12" height="12" viewBox="0 0 12 12" stroke="#666e80"><path d="M.5.5h11v11H.5z" fill="#a9afbb" /><path d="M3.500 2.500h5v7h-5z" fill="#fff" /></svg>
          </button>
          <button aria-label="Oldaltörés megtekintése" className="flex w-[18px] items-center justify-center">
            <svg width="13" height="12" viewBox="0 0 13 12" stroke="#666e80"><path d="M.5.5h12v11H.5z" fill="#a9afbb" /><path d="M1.500.5h4v7h-4zM7.500.5h4v5h-4z" fill="#fff" /></svg>
          </button>
        </div>
        <button className="w-11 pr-2 text-center">100%</button>
        <button aria-label="Kicsinyítés" className="flex size-4 items-center justify-center rounded-full border border-[#4f6a96] bg-[#e9f1fb]">
          <svg width="8" height="2" viewBox="0 0 8 2"><path d="M0 0h8v2H0z" fill="#3b4a68" /></svg>
        </button>
        <div className="relative flex flex-1 items-center justify-center">
          <div className="absolute inset-x-0 top-1/2 h-px bg-[#e8f2ff]" />
          <svg width="9" height="13" viewBox="0 0 9 13" className="relative">
            <path d="M.5.5h8v8l-4 4-4-4z" fill="#eef4fc" stroke="#4f6a96" />
            <path d="M4.500 3v5" stroke="#8094b8" />
          </svg>
        </div>
        <button aria-label="Nagyítás" className="mr-[5px] flex size-4 items-center justify-center rounded-full border border-[#4f6a96] bg-[#e9f1fb]">
          <svg width="8" height="8" viewBox="0 0 8 8"><path d="M0 3h8v2H0zM3 0h2v8H3z" fill="#3b4a68" /></svg>
        </button>
      </div>
    </div>
  );
}

/* ---------- taskbar ---------- */

const TASKS = [
  {
    label: 'Windows Live Fotótár',
    icon: (
      <svg width="15" height="15" viewBox="0 0 15 15">
        <path d="M1 4h9v10H1z" fill="#f2a53c" stroke="#fff" />
        <path d="M4.500.5h10v11h-10z" fill="#fff4dd" stroke="#e08a2a" />
        <circle cx="9" cy="6" r="3" fill="#e2642a" />
      </svg>
    ),
  },
  {
    label: 'WLXPhotoGallery.exe...',
    icon: <svg width="15" height="12" viewBox="0 0 15 12"><path d="M0 0h15v12H0z" fill="#fff" /><path d="M0 0h15v2H0z" fill="#a9c4f5" /></svg>,
  },
  {
    label: 'Total Commander 6.5...',
    icon: (
      <svg width="15" height="15" viewBox="0 0 15 15">
        <path d="M0 0h15v15H0z" fill="#14146e" />
        <path d="M4 0h7v4H4zM2 7h11v7H2z" fill="#fff" />
        <path d="M8 1h2v3H8z" fill="#14146e" />
        <path d="M2 7h11v1.500H2zM2 10h11v1.500H2z" fill="#c9242a" />
      </svg>
    ),
  },
  {
    label: 'Microsoft Excel - A os...',
    icon: (
      <svg width="14" height="15" viewBox="0 0 14 15">
        <path d="M.5.5h13v14H.5z" fill="#e9f6e4" stroke="#8bbf7e" />
        <path d="M3 4l7 8M10 4l-7 8" stroke="#2c8a34" strokeWidth="2.500" />
      </svg>
    ),
  },
];

function Taskbar() {
  return (
    <div className="flex h-[30px] bg-linear-to-b from-[#3a80ee] via-[#245edb] via-20% to-[#1d4fc4] text-[11px] text-white font-['DejaVu_Sans_Condensed','DejaVu_Sans',sans-serif]">
      <button className="flex w-[99px] shrink-0 items-center gap-[6px] rounded-r-xl bg-linear-to-b from-[#5eb558] via-[#388f38] via-25% to-[#2f7f2f] pl-[10px] text-[17px] font-bold italic shadow-[inset_-3px_0_4px_#1f6a22] font-['Open_Sans',sans-serif]">
        <WindowsFlag />
        Start
      </button>
      <div className="flex flex-1 items-center gap-px pl-[9px]">
        {TASKS.map((t, i) => (
          <button
            key={t.label}
            className={clsx(
              'flex h-[25px] w-[159px] items-center gap-[5px] rounded-[3px] pl-[10px] whitespace-nowrap',
              i === 3 ? 'bg-[#1c4fb4] shadow-[inset_1px_1px_2px_#0f3482]' : 'bg-linear-to-b from-[#5a95f8] via-[#3c7ff2] via-20% to-[#3676ea]',
            )}
          >
            {t.icon}
            {t.label}
          </button>
        ))}
      </div>
      <span className="flex w-[37px] items-center">HU</span>
      <div className="w-[7px] bg-[#1aa0ea]" />
      <div className="flex w-[139px] shrink-0 items-center border-l-2 border-t-2 border-b-2 border-[#ece9d8] bg-[#7f97dd] pl-[2px] text-[13px] font-semibold text-[#dbe4fa] whitespace-nowrap overflow-hidden font-['Open_Sans',sans-serif]">
        WLXPhotoGallery.exe
      </div>
    </div>
  );
}

export default function App() {
  const [tab, setTab] = useState(TABS[0]);
  const [formula, setFormula] = useState('25 min');

  return (
    <div className="flex flex-col bg-[#bfdbff] overflow-hidden font-['Open_Sans','Noto_Sans',sans-serif]">
      <header className="relative">
        <div className="flex h-[26px] items-center border-b border-[#b0cff7] bg-linear-to-b from-[#e4eefb] via-[#d0e0f6] via-35% to-[#e2effe] pr-2">
          <h1 className="flex-1 pl-[70px] pt-1 text-center text-[12px] text-[#6f7d95] font-['Noto_Sans',sans-serif]">
            A oszt hűtőborda hőmérséklet.xls <span className="text-[#3e6aaa]">&nbsp;- Microsoft Excel</span>
          </h1>
          <WindowButtons />
        </div>
        <div className="flex h-[25px] items-end pl-[47px] pr-[6px]">
          <nav className="flex flex-1 gap-[6px]">
            {TABS.map((t) => (
              <button
                key={t}
                onClick={() => setTab(t)}
                className={clsx(
                  'h-[22px] px-[10px] text-[11px] text-[#15428b] border border-b-0 rounded-t-[4px] whitespace-nowrap',
                  t === tab ? 'border-[#8db2e3] bg-linear-to-b from-[#f6faff] to-[#e1ecf9]' : 'border-transparent',
                )}
              >
                {t}
              </button>
            ))}
          </nav>
          <div className="flex h-full items-center gap-[10px]">
            <button aria-label="Súgó" className="flex size-[13px] items-center justify-center rounded-full bg-[#2e62c0] text-[10px] font-bold leading-none text-white outline outline-[#7da2de]">?</button>
            <WindowButtons small />
          </div>
        </div>
        <button aria-label="Office gomb" className="absolute left-[2px] top-[3px]"><OfficeLogo /></button>
      </header>
      <Ribbon />
      <QuickAccess />
      <FormulaBar value={formula} onChange={setFormula} />
      <main className="mt-px flex border-t border-[#6f93bd]">
        <Sheet active="G101" />
        <VScroll />
      </main>
      <SheetTabs />
      <StatusBar />
      <Taskbar />
    </div>
  );
}
